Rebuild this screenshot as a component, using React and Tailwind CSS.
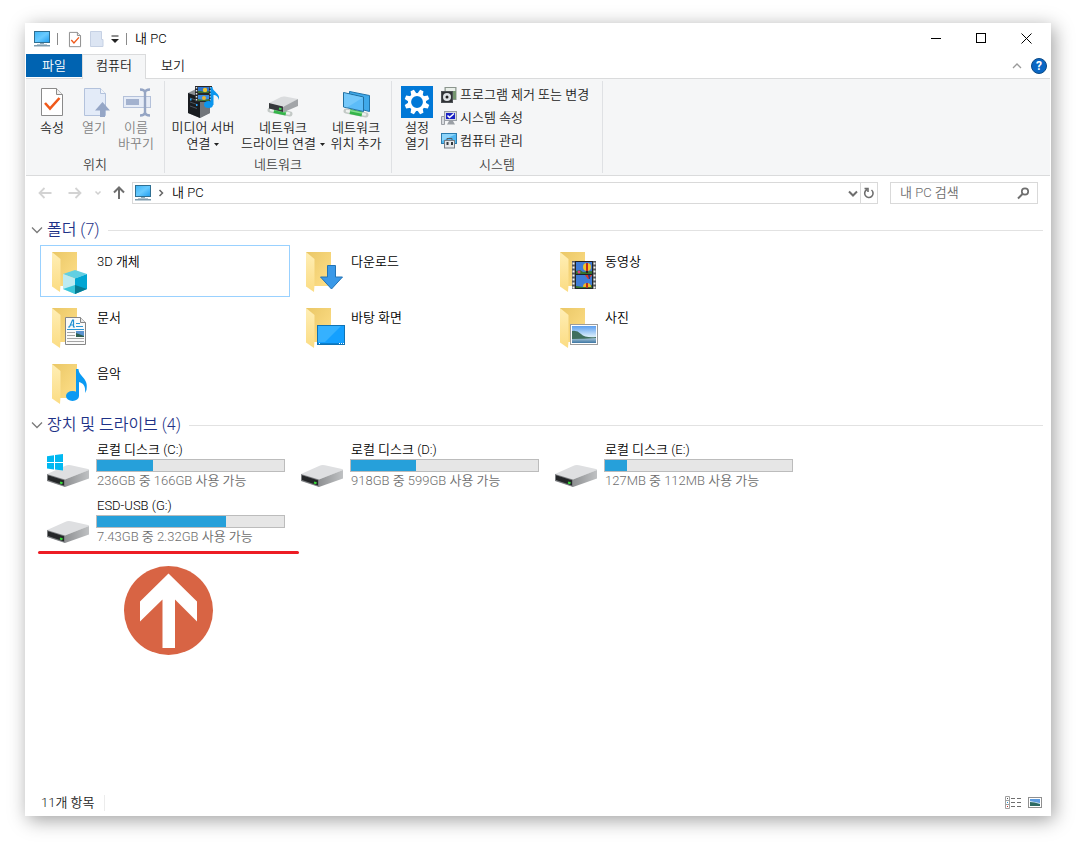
import React, { useState } from "react";

const MonitorIcon = () => (
  <svg width="18" height="16" viewBox="0 0 18 16" className="shrink-0">
    <defs>
      <linearGradient id="screen" x1="0" y1="0" x2="1" y2="1">
        <stop offset="0" stopColor="#3fb4f5" />
        <stop offset="0.5" stopColor="#69cbff" />
        <stop offset="1" stopColor="#1e9df0" />
      </linearGradient>
    </defs>
    <rect x="1.500" y="0.500" width="15" height="11" fill="url(#screen)" stroke="#2f6f92" />
    <path d="M7 12h4v1H7z" fill="#8fa9b8" />
    <path d="M4 13h10v1H4z" fill="#b5c7d2" />
    <path d="M1 14h16v1.500H1z" fill="#7f9cae" />
  </svg>
);

const CheckPageIcon = ({ large }) => (
  <svg
    width={large ? 32 : 16}
    height={large ? 32 : 18}
    viewBox={large ? "0 0 32 32" : "2 -2 28 34"}
    className="shrink-0"
  >
    <path d="M5.500 2.500h15l6 6v21h-21z" fill="#fff" stroke="#8a8a8a" strokeWidth={large ? 1 : 1.800} />
    <path d="M20.500 2.500v6h6" fill="#eee" stroke="#8a8a8a" strokeWidth={large ? 1 : 1.800} />
    <path d="M9 17l5 5.500L23.500 12" fill="none" stroke="#f0591a" strokeWidth="2.600" />
  </svg>
);

const FadedPageIcon = () => (
  <svg width="16" height="18" viewBox="0 0 16 18">
    <path d="M1.500 1.500h11v8h1.500v7H1.500z" fill="#dce5f3" stroke="#c6d1e4" />
  </svg>
);

const OpenIcon = () => (
  <svg width="32" height="32" viewBox="0 0 32 32">
    <path d="M6.500 2.500h16l5 5v22h-21z" fill="#e3ebf8" stroke="#b3c2dc" />
    <path d="M22.500 2.500v5h5" fill="#f2f5fa" stroke="#b3c2dc" />
    <path d="M24.500 16l7.500 8.500h-5V31h-5v-6.500h-5z" fill="#95a6c6" />
  </svg>
);

const RenameIcon = () => (
  <svg width="32" height="32" viewBox="0 0 32 32">
    <rect x="3.500" y="10.500" width="27" height="11" fill="#e6ecf7" stroke="#b4c1da" />
    <rect x="6" y="13" width="13" height="6" fill="#a3b2cf" />
    <path d="M20 3.500q4.500 0 5 3 .5-3 5-3M25 5.500v22M20 29.500q4.500 0 5-3 .5 3 5 3" fill="none" stroke="#95a5c4" strokeWidth="2.400" />
  </svg>
);

const MediaServerIcon = () => (
  <svg width="32" height="32" viewBox="0 0 32 32">
    <path d="M1 7l8-4 14 4v20l-10 5L1 27z" fill="#8d9196" />
    <path d="M1 7l12 4v21L1 27z" fill="#191c20" />
    <path d="M13 11l10-4v20l-10 5z" fill="#72767b" />
    <path d="M3 12l7 2.500M3 16l7 2.500M3 20l7 2.500" stroke="#4a535d" />
    <path d="M3 13.500h1.500M9 19h1.500" stroke="#2aa7ff" strokeWidth="2" />
    <rect x="8" y="0" width="17" height="16" fill="#25272b" />
    <rect x="11" y="1" width="11" height="6" fill="#2d74d0" />
    <rect x="11" y="9" width="11" height="6" fill="#3c8de0" />
    <path d="M9.500 1v15M23.500 1v15" stroke="#e8e8e8" strokeWidth="1.500" strokeDasharray="1.500 1.500" />
    <path d="M11 5l3 0 3 1 5-1v2H11zM11 13l5 1 6-1v2H11z" fill="#3b7034" />
    <circle cx="18" cy="4" r="2.200" fill="#edc22e" />
    <circle cx="17" cy="12" r="2" fill="#e8b430" />
    <ellipse cx="21.500" cy="18.500" rx="4.500" ry="3.600" fill="#0b96ee" />
    <path d="M23.500 19V1h2c0 5 8 6 6.500 13-1-4-3.500-5-5.500-5v10z" fill="#0b96ee" />
  </svg>
);

const NetworkPipe = () => (
  <>
    <path d="M3 22l20 4" stroke="#c3c9c6" strokeWidth="5" strokeLinecap="round" />
    <path d="M4 22l18 3.500" stroke="#eef1ef" strokeWidth="2.500" strokeLinecap="round" />
    <path d="M7 22.500l12 2.500" stroke="#35b54a" strokeWidth="5" />
    <path d="M7 21.500l12 2.500" stroke="#84dc90" strokeWidth="1.500" />
  </>
);

const NetworkDriveIcon = () => (
  <svg width="32" height="32" viewBox="0 0 32 32">
    <g transform="translate(0 2)">
      <NetworkPipe />
    </g>
    <path d="M2 17l12-6q2-.8 4-.4l13 2.400-13 8z" fill="#dadcde" />
    <path d="M16 21l15-8v7l-15 6.500z" fill="#a2a5a8" />
    <path d="M2 17l14 3.500V26L2 22.500z" fill="#35383b" />
    <path d="M12 22.500l2.500.6" stroke="#3ede57" strokeWidth="2" />
  </svg>
);

const NetworkPlaceIcon = () => (
  <svg width="32" height="32" viewBox="0 0 32 32">
    <g transform="translate(3 3)">
      <NetworkPipe />
    </g>
    <path d="M9.500 5.500l20 4v16l-20-5z" fill="#3fa9ea" stroke="#2274aa" />
    <path d="M3.500 6.500l20 4.500v14.500l-20-4.500z" fill="#5cbcf8" stroke="#226f9f" />
    <path d="M4 7.200l19 4.300L7 21.500l-3-.8z" fill="#86d0fb" opacity="0.600" />
  </svg>
);

const SettingsIcon = () => (
  <svg width="32" height="32" viewBox="0 0 32 32">
    <rect width="32" height="32" fill="#0078d7" />
    <circle cx="16" cy="16" r="7.500" fill="none" stroke="#fff" strokeWidth="3.200" />
    {[0, 45, 90, 135, 180, 225, 270, 315].map((angle) => (
      <path
        key={angle}
        d="M14.200 3.500h3.600l1 4.500h-5.600z"
        fill="#fff"
        transform={`rotate(${angle + 22.5} 16 16)`}
      />
    ))}
  </svg>
);

const UninstallIcon = () => (
  <svg width="16" height="16" viewBox="0 0 16 16">
    <rect x="4" y="0.500" width="11" height="12" fill="#b9c3bb" stroke="#8b958d" />
    <path d="M5 1h9v3H5z" fill="#e9efe9" />
    <path d="M11 4h4v8h-4z" fill="#74966f" />
    <rect x="0.500" y="4.500" width="11" height="11" fill="#303336" stroke="#4e5256" />
    <circle cx="6" cy="10" r="4" fill="#dfe3e6" />
    <circle cx="6" cy="10" r="1.500" fill="#222" />
  </svg>
);

const SystemIcon = () => (
  <svg width="16" height="16" viewBox="0 0 16 16">
    <path d="M0.500 6.500h3v8h-3z" fill="#d9dce0" stroke="#9b9fa5" />
    <rect x="3.500" y="1.500" width="12" height="9" fill="#d9dce0" stroke="#9a9fa6" />
    <rect x="5" y="3" width="9" height="6" fill="#1b22c4" />
    <path d="M6.500 5.500l2 2L13 3.500" fill="none" stroke="#fff" strokeWidth="1.500" />
    <path d="M8 11h4l2 3.500H6z" fill="#9ba0a6" />
  </svg>
);

const ManageIcon = () => (
  <svg width="16" height="16" viewBox="0 0 16 16">
    <rect x="0.500" y="0.500" width="15" height="10" fill="#50b7f1" stroke="#2b7cae" />
    <path d="M1 1h14L1 8z" fill="#8dd5fb" />
    <path d="M6 7.500V5.500h5v2" fill="none" stroke="#555b61" />
    <rect x="3.500" y="7.500" width="10" height="7.500" fill="#e3e6e9" stroke="#767c83" />
    <path d="M5.500 9h2v3h-2zM10 9h2v3h-2z" fill="#34393e" />
  </svg>
);

const Folder = ({ children }) => (
  <svg width="48" height="48" viewBox="0 0 48 48" className="shrink-0">
    <defs>
      <linearGradient id="folderBack" x1="0" y1="0" x2="1" y2="1">
        <stop offset="0" stopColor="#eac766" />
        <stop offset="1" stopColor="#ffe08a" />
      </linearGradient>
      <linearGradient id="folderFlap" x1="0" y1="0" x2="0" y2="1">
        <stop offset="0" stopColor="#ffeeb5" />
        <stop offset="1" stopColor="#fbdc83" />
      </linearGradient>
    </defs>
    <path d="M9 5h25v34H9z" fill="url(#folderBack)" />
    <path d="M9 5l8.500 7v26l-.5 7L9 39.500z" fill="url(#folderFlap)" />
    {children}
  </svg>
);

const ObjectsOverlay = () => (
  <>
    <path d="M20 27l12-4 12 4-12 4.500z" fill="#62cfe2" />
    <path d="M20 27l12 4.500V47l-12-5z" fill="#bdebf1" />
    <path d="M44 27l-12 4.500V47l12-5z" fill="#00a6d3" />
    <path d="M20 42l12-4v9z" fill="#3bc7da" />
    <path d="M44 42l-12-4v9z" fill="#067c93" />
  </>
);

const DownloadOverlay = () => (
  <path d="M30.500 18.500h8V30h7L34.500 42 23.500 30h7z" fill="#3a99e8" stroke="#2273b5" />
);

const VideoOverlay = () => (
  <>
    <rect x="21" y="14" width="24" height="28" fill="#55585c" />
    <path d="M22.500 15.500V42M43.500 15.500V42" stroke="#f2f2f2" strokeWidth="2" strokeDasharray="2 2" />
    <rect x="24" y="14" width="18" height="28" fill="#202226" />
    <rect x="25" y="15" width="16" height="12" fill="#3f7cd6" />
    <rect x="25" y="28" width="16" height="13" fill="#3f7cd6" />
    <path d="M25 24l4-1 3 2 9-1v3H25zM25 39l7 1 9-2v3H25z" fill="#35752f" />
    <circle cx="28" cy="25" r="1.500" fill="#df3b86" />
    <circle cx="36" cy="20" r="4" fill="#f0c52b" />
    <path d="M35 16h2v8h-2z" fill="#c32b1e" />
    <path d="M35 24h2v2h-2z" fill="#332222" />
    <path d="M34 28h7l-3 4h-1z" fill="#d8382b" />
    <path d="M37 28h2v4h-1z" fill="#24358c" />
    <path d="M32 40a4 4 0 018 0z" fill="#efb927" />
    <path d="M35 36h2v5h-2z" fill="#b92f20" />
  </>
);

const DocumentOverlay = () => (
  <>
    <path d="M22.500 14.500h15l5 5v22h-20z" fill="#fafafa" stroke="#858585" />
    <path d="M37.500 14.500v5h5" fill="#e8e8e8" stroke="#858585" />
    <path d="M25 24h1.500l3-7h1v7h1.500M27 22h3.500" fill="none" stroke="#1f8fd3" strokeWidth="1.200" />
    <path d="M33 20.500h4M33 23.500h7M24 26.500h17" stroke="#2b95d6" />
    <path d="M24 29.500h8M24 32.500h8M24 35.500h17M24 38.500h17" stroke="#a5a5a5" />
    <rect x="33" y="28" width="8" height="6" fill="#5b94d0" />
    <path d="M33 30l8 3v1h-8z" fill="#2f5f50" />
  </>
);

const DesktopOverlay = () => (
  <>
    <rect x="20.500" y="22.500" width="27" height="19" fill="#14a0ff" stroke="#0f73b5" />
    <path d="M21 23h23L28 39h-7z" fill="#35b1ff" />
    <path d="M21 40h26v1H21z" fill="#0b80cf" />
    <path d="M22 40.500h1M42 40.500h1M44 40.500h1M46 40.500h1" stroke="#fff" />
  </>
);

const PhotoOverlay = () => (
  <>
    <defs>
      <linearGradient id="sky" x1="0" y1="0" x2="0" y2="1">
        <stop offset="0" stopColor="#5c9ff0" />
        <stop offset="0.6" stopColor="#d6ebfa" />
      </linearGradient>
      <linearGradient id="lake" x1="0" y1="0" x2="0" y2="1">
        <stop offset="0" stopColor="#a9c6d8" />
        <stop offset="1" stopColor="#3d76a3" />
      </linearGradient>
    </defs>
    <rect x="19.500" y="21.500" width="27" height="20" fill="#fff" stroke="#9c9c9c" />
    <rect x="21" y="23" width="24" height="17" fill="url(#sky)" />
    <rect x="21" y="35" width="24" height="5" fill="url(#lake)" />
    <path d="M21 28q5-1 9 3t15 3v1q-12 1-24 1z" fill="#3f6f5e" />
  </>
);

const MusicOverlay = () => (
  <>
    <ellipse cx="29.500" cy="37" rx="6.500" ry="5" fill="#0a9af3" />
    <path d="M33 37V10h2.500c.5 8 10.500 9 8 21l-1.500 3c1-7-2-10-6-11v14z" fill="#0a9af3" />
  </>
);

const DriveIcon = ({ system }) => (
  <svg width="48" height="48" viewBox="0 0 48 48" className="shrink-0">
    <defs>
      <linearGradient id="driveSide" x1="0" y1="0" x2="1" y2="0">
        <stop offset="0" stopColor="#8f9193" />
        <stop offset="1" stopColor="#bfc1c3" />
      </linearGradient>
    </defs>
    <path d="M4 33l18-8q3-1.500 6-.7L45 28q2 .6 0 1.500L22 38.500z" fill="#dedfe1" />
    <path d="M22 38.500L46 29v8.500L22 46z" fill="url(#driveSide)" />
    <path d="M4 33l18 5.500V46L4 40z" fill="#7b7d80" />
    <path d="M5 34.300l16 4.900v5.300L5 39z" fill="#242628" />
    <path d="M17 41.500l2.500.8" stroke="#38dc39" strokeWidth="2" />
    {system && (
      <path
        d="M4 15.200l7-1V21H4zM12 14l8-1v8h-8zM4 22h7v6.500l-7-1zM12 22h8v7.500l-8-1z"
        fill="#00b8f1"
      />
    )}
  </svg>
);

const folders = [
  { name: "3D 개체", Overlay: ObjectsOverlay },
  { name: "다운로드", Overlay: DownloadOverlay },
  { name: "동영상", Overlay: VideoOverlay },
  { name: "문서", Overlay: DocumentOverlay },
  { name: "바탕 화면", Overlay: DesktopOverlay },
  { name: "사진", Overlay: PhotoOverlay },
  { name: "음악", Overlay: MusicOverlay },
];

const drives = [
  { name: "로컬 디스크 (C:)", space: "236GB 중 166GB 사용 가능", used: 30, system: true },
  { name: "로컬 디스크 (D:)", space: "918GB 중 599GB 사용 가능", used: 35 },
  { name: "로컬 디스크 (E:)", space: "127MB 중 112MB 사용 가능", used: 12 },
  { name: "ESD-USB (G:)", space: "7.43GB 중 2.32GB 사용 가능", used: 69 },
];

const Caret = () => (
  <svg width="5" height="3" viewBox="0 0 5 3" className="inline-block ml-1 align-middle">
    <path d="M0 0h5L2.500 3z" fill="#222" />
  </svg>
);

const RibbonButton = ({ icon, lines, caret, disabled, className }) => (
  <button
    type="button"
    disabled={disabled}
    className={`flex flex-col items-center text-[#222] disabled:text-[#838383] ${className}`}
  >
    {icon}
    <span className="mt-0.5 leading-4 whitespace-nowrap">
      {lines.map((line, index) => (
        <span key={line} className="block">
          {line}
          {caret && index === lines.length - 1 && <Caret />}
        </span>
      ))}
    </span>
  </button>
);

const RibbonGroup = ({ label, className, children }) => (
  <div className="py-0.5">
    <section
      className={`flex flex-col h-[92px] border-r border-[#dfe1e4] ${className}`}
    >
      <div className="flex items-start">{children}</div>
      <h2 className="mt-auto text-center leading-4 text-[#444]">{label}</h2>
    </section>
  </div>
);

const SectionHeader = ({ title, count, open, onToggle }) => (
  <button
    type="button"
    onClick={onToggle}
    className="flex items-center w-full h-6 pt-0.5 text-base leading-[22px] text-[#1e3287]"
  >
    <svg width="12" height="8" viewBox="0 0 12 8" className={open ? "" : "-rotate-90"}>
      <path d="M1 1.500l5 5 5-5" fill="none" stroke="#7a7a7a" strokeWidth="1.300" />
    </svg>
    <span className="ml-1">
      {title} ({count})
    </span>
    <span className="ml-2 h-px grow bg-[#e2e2e2]" />
  </button>
);

const App = () => {
  const [showFolders, setShowFolders] = useState(true);
  const [showDrives, setShowDrives] = useState(true);
  const [selected, setSelected] = useState("3D 개체");
  const [search, setSearch] = useState("");

  return (
    <div className="flex min-h-screen bg-white pt-[23px] pr-[30px] pb-7 pl-[25px] font-['Roboto','Noto_Sans_CJK_KR',sans-serif] font-[350] text-[13px] text-black">
      <div className="flex flex-col grow min-w-0 border border-white bg-white shadow-[3px_4px_18px_0_rgba(0,0,0,0.38)]">
        {/* Title Bar */}
        <header className="flex items-center h-[30px] pb-px pl-[7px]">
          <MonitorIcon />
          <span className="ml-1.5 w-px h-3 bg-[#8a8a8a]" />
          <button type="button" aria-label="속성" className="ml-[9px]">
            <CheckPageIcon />
          </button>
          <button type="button" aria-label="새 폴더" className="ml-1.5">
            <FadedPageIcon />
          </button>
          <button type="button" aria-label="사용자 지정" className="ml-1.5">
            <svg width="8" height="8" viewBox="0 0 8 8">
              <path d="M0.500 1h7" stroke="#222" />
              <path d="M0 4h8L4 8z" fill="#222" />
            </svg>
          </button>
          <span className="ml-[7px] w-px h-3 bg-[#8a8a8a]" />
          <h1 className="ml-2 leading-4">내 PC</h1>
          <div className="flex ml-auto mr-px h-full">
            <button type="button" aria-label="최소화" className="flex items-center justify-center w-[45px]">
              <svg width="11" height="11" viewBox="0 0 11 11">
                <path d="M0 5.500h10" stroke="#000" />
              </svg>
            </button>
            <button type="button" aria-label="최대화" className="flex items-center justify-center w-[45px]">
              <svg width="11" height="11" viewBox="0 0 11 11">
                <rect x="0.500" y="0.500" width="9" height="9" fill="none" stroke="#000" />
              </svg>
            </button>
            <button type="button" aria-label="닫기" className="flex items-center justify-center w-[45px]">
              <svg width="11" height="11" viewBox="0 0 11 11">
                <path d="M0.500 0.500l10 10M10.500 0.500l-10 10" stroke="#000" />
              </svg>
            </button>
          </div>
        </header>

        {/* Tabs */}
        <nav className="flex h-[25px] border-b border-[#dadbdc] leading-[22px]">
          <button type="button" className="w-14 h-[23px] bg-[#0063b1] text-white">
            파일
          </button>
          <button
            type="button"
            className="w-16 h-[25px] pb-0.5 border border-b-0 border-[#dadbdc] bg-[#f5f6f7] text-[#222]"
          >
            컴퓨터
          </button>
          <button type="button" className="w-[54px] h-[23px] text-[#222]">
            보기
          </button>
          <div className="flex items-center gap-[9px] ml-auto mr-[3px]">
            <button type="button" aria-label="리본 최소화">
              <svg width="10" height="6" viewBox="0 0 10 6">
                <path d="M1 5l4-4 4 4" fill="none" stroke="#9a9a9a" strokeWidth="1.300" />
              </svg>
            </button>
            <button
              type="button"
              aria-label="도움말"
              className="flex items-center justify-center size-4 rounded-full border border-[#0b4a86] bg-[#0a67c4] text-xs font-bold leading-none text-white"
            >
              ?
            </button>
          </div>
        </nav>

        {/* Ribbon */}
        <div className="flex h-[97px] border-b border-[#dadbdc] bg-[#f5f6f7]">
          <RibbonGroup label="위치" className="w-[139px] pt-[5px] px-[5px]">
            <RibbonButton icon={<CheckPageIcon large />} lines={["속성"]} className="w-[42px]" />
            <RibbonButton icon={<OpenIcon />} lines={["열기"]} disabled className="w-[42px]" />
            <RibbonButton icon={<RenameIcon />} lines={["이름", "바꾸기"]} disabled className="w-[42px]" />
          </RibbonGroup>
          <RibbonGroup label="네트워크" className="w-[227px] pt-[5px] px-0.5">
            <RibbonButton icon={<MediaServerIcon />} lines={["미디어 서버", "연결"]} caret className="w-[72px]" />
            <RibbonButton icon={<NetworkDriveIcon />} lines={["네트워크", "드라이브 연결"]} caret className="w-[88px]" />
            <RibbonButton icon={<NetworkPlaceIcon />} lines={["네트워크", "위치 추가"]} className="w-[58px]" />
          </RibbonGroup>
          <RibbonGroup label="시스템" className="w-[211px] pt-[5px] px-1">
            <RibbonButton icon={<SettingsIcon />} lines={["설정", "열기"]} className="w-[42px]" />
            <div className="flex flex-col -mt-[3px] ml-[3px] text-[#222]">
              <button type="button" className="flex items-center gap-[3px] h-[23px] leading-4 whitespace-nowrap">
                <UninstallIcon />
                프로그램 제거 또는 변경
              </button>
              <button type="button" className="flex items-center gap-[3px] h-[23px] leading-4 whitespace-nowrap">
                <SystemIcon />
                시스템 속성
              </button>
              <button type="button" className="flex items-center gap-[3px] h-[23px] leading-4 whitespace-nowrap">
                <ManageIcon />
                컴퓨터 관리
              </button>
            </div>
          </RibbonGroup>
        </div>

        {/* Address Bar */}
        <div className="flex items-center pt-1.5 pr-3 pl-3">
          <button type="button" aria-label="뒤로" disabled>
            <svg width="14" height="12" viewBox="0 0 14 12">
              <path d="M6.500 1L1.500 6l5 5M2 6h11.500" fill="none" stroke="#d3d3d3" strokeWidth="1.800" />
            </svg>
          </button>
          <button type="button" aria-label="앞으로" disabled className="ml-4">
            <svg width="14" height="12" viewBox="0 0 14 12">
              <path d="M7.500 1l5 5-5 5M12 6H0.500" fill="none" stroke="#d3d3d3" strokeWidth="1.800" />
            </svg>
          </button>
          <button type="button" aria-label="최근 위치" className="ml-3">
            <svg width="8" height="6" viewBox="0 0 8 6">
              <path d="M1.500 1.500L4 4l2.500-2.500" fill="none" stroke="#cfcfcf" strokeWidth="1.500" />
            </svg>
          </button>
          <button type="button" aria-label="위로" className="ml-[11px]">
            <svg width="12" height="14" viewBox="0 0 12 14">
              <path d="M1 6.500l5-5 5 5M6 2v11" fill="none" stroke="#6e6e6e" strokeWidth="2" />
            </svg>
          </button>
          <div className="flex items-center grow h-[22px] ml-[7px] border border-[#d9d9d9]">
            <span className="ml-px flex">
              <MonitorIcon />
            </span>
            <svg width="6" height="8" viewBox="0 0 6 8" className="ml-1.5">
              <path d="M1.500 1l3 3-3 3" fill="none" stroke="#666" strokeWidth="1.500" />
            </svg>
            <button type="button" className="ml-2 pb-px leading-4">
              내 PC
            </button>
            <button type="button" aria-label="이전 위치" className="ml-auto mr-0.5">
              <svg width="10" height="7" viewBox="0 0 10 7">
                <path d="M1 1.500l4 4 4-4" fill="none" stroke="#6e6e6e" strokeWidth="2" />
              </svg>
            </button>
            <button
              type="button"
              aria-label="새로 고침"
              className="flex items-center justify-center w-[17px] h-full border-l border-[#d9d9d9]"
            >
              <svg width="12" height="12" viewBox="0 0 12 12">
                <path d="M4 2.500a4.200 4.200 0 104.500.5M1.500 1.500H5v3.500" fill="none" stroke="#6e6e6e" strokeWidth="1.600" />
              </svg>
            </button>
          </div>
          <label className="flex items-center w-[148px] h-[22px] ml-3 border border-[#d9d9d9]">
            <input
              type="text"
              aria-label="내 PC 검색"
              placeholder="내 PC 검색"
              value={search}
              onChange={(e) => setSearch(e.target.value)}
              className="w-full min-w-0 pb-px pl-[9px] leading-4 outline-none placeholder:text-[#6d6d6d]"
            />
            <svg width="13" height="13" viewBox="0 0 13 13" className="mr-[7px] shrink-0">
              <circle cx="8" cy="4.500" r="3.200" fill="none" stroke="#6e6e6e" strokeWidth="1.700" />
              <path d="M5.500 7L1 11.500" stroke="#6e6e6e" strokeWidth="2" />
            </svg>
          </label>
        </div>

        {/* Content */}
        <main className="grow pt-[13px] pr-[7px] pl-[5px]">
          <SectionHeader
            title="폴더"
            count={folders.length}
            open={showFolders}
            onToggle={() => setShowFolders(!showFolders)}
          />
          {showFolders && (
            <div className="grid grid-cols-[repeat(auto-fill,250px)] gap-1 mt-1 ml-[9px]">
              {folders.map(({ name, Overlay }) => (
                <button
                  key={name}
                  type="button"
                  onClick={() => setSelected(name)}
                  className={`flex h-[52px] border pt-px pl-0.5 text-left ${
                    selected === name ? "border-[#99d1ff]" : "border-transparent"
                  }`}
                >
                  <Folder>
                    <Overlay />
                  </Folder>
                  <span className="ml-1.5 mt-[7px] leading-4">{name}</span>
                </button>
              ))}
            </div>
          )}

          <div className="mt-[3px]">
            <SectionHeader
              title="장치 및 드라이브"
              count={drives.length}
              open={showDrives}
              onToggle={() => setShowDrives(!showDrives)}
            />
          </div>
          {showDrives && (
            <div className="grid grid-cols-[repeat(auto-fill,250px)] gap-1 mt-[5px] ml-[9px]">
              {drives.map((drive) => (
                <button key={drive.name} type="button" className="flex h-[52px] pl-[3px] text-left">
                  <DriveIcon system={drive.system} />
                  <span className="block ml-[5px] w-[189px]">
                    <span className="block pl-px leading-[18px]">{drive.name}</span>
                    <span className="block h-[13px] border border-[#bcbcbc] bg-[#e6e6e6]">
                      <span
                        className="block h-full bg-[#26a0da]"
                        style={{ width: `${drive.used}%` }}
                      />
                    </span>
                    <span className="block pl-px leading-[18px] whitespace-nowrap text-[#6d6d6d]">
                      {drive.space}
                    </span>
                  </span>
                </button>
              ))}
            </div>
          )}

          {/* Highlight under the USB drive */}
          <div className="mt-0.5 ml-[7px] w-[261px] h-[3px] rounded-full bg-[#ed1c24]" />
          <svg width="90" height="90" viewBox="0 0 90 90" className="mt-3 ml-[93px]">
            <circle cx="44.500" cy="44.500" r="44.500" fill="#d86444" />
            <path d="M44.500 7.500l28.500 28v20L51 33.500V82H38.500V33.500L16 55.500v-20z" fill="#fff" />
          </svg>
        </main>

        {/* Status Bar */}
        <footer className="flex items-center h-6 pb-px pl-[15px] pr-2">
          <span className="pr-2.5 border-r border-[#ececec] leading-4 text-[#222]">
            11개 항목
          </span>
          <button type="button" aria-label="자세히" className="ml-auto">
            <svg width="17" height="13" viewBox="0 0 17 13">
              <path d="M0.500 0.500h4v12h-4zM0.500 4.500h4M0.500 8.500h4" fill="#fff" stroke="#a0a0a0" />
              <path d="M2 2.500h1" stroke="#555" />
              <path d="M2 6.500h1" stroke="#2497d8" />
              <path d="M2 10.500h1" stroke="#c42b2b" />
              <path d="M6 2.500h4M12 2.500h4M6 6.500h4M12 6.500h4M6 10.500h4M12 10.500h4" stroke="#6e6e6e" />
            </svg>
          </button>
          <button type="button" aria-label="큰 아이콘" className="ml-1.5">
            <svg width="14" height="11" viewBox="0 0 14 11">
              <rect x="0.500" y="0.500" width="13" height="10" fill="#fff" stroke="#8f8f8f" />
              <path d="M2 2h10v7H2z" fill="#5c9be0" />
              <path d="M2 4l5 1 5 1v1H2z" fill="#d5e8f5" />
              <path d="M2 5q4 0 10 2v2H2z" fill="#2d6a62" />
            </svg>
          </button>
        </footer>
      </div>
    </div>
  );
};

export default App;
